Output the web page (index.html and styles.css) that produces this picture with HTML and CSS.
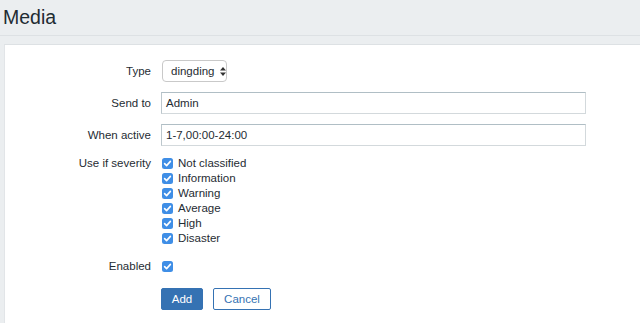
FILE: index.html
```html
<!DOCTYPE html>
<html>
<head>
<meta charset="utf-8">
<link rel="stylesheet" href="styles.css">
</head>
<body>
<header class="header"><h1 class="title">Media</h1></header>
<main class="panel">
  <form class="form">
    <div class="row">
      <label class="label">Type</label>
      <div class="select"><span class="select-text">dingding</span>
        <svg class="select-arrows" width="6" height="9" viewBox="0 0 6 9"><path d="M3 0L6 3.5H0Z" fill="#333"/><path d="M3 9L6 5.5H0Z" fill="#333"/></svg>
      </div>
    </div>
    <div class="row">
      <label class="label">Send to</label>
      <div class="input">Admin</div>
    </div>
    <div class="row">
      <label class="label">When active</label>
      <div class="input">1-7,00:00-24:00</div>
    </div>
    <div class="row row-checks">
      <label class="label label-line">Use if severity</label>
      <ul class="checks">
        <li class="check-line"><span class="cb"><svg width="11" height="11" viewBox="0 0 11 11"><path d="M2.6 5.6L4.6 7.6L8.4 3.4" fill="none" stroke="#fff" stroke-width="1.6" stroke-linecap="round" stroke-linejoin="round"/></svg></span>Not classified</li>
        <li class="check-line"><span class="cb"><svg width="11" height="11" viewBox="0 0 11 11"><path d="M2.6 5.6L4.6 7.6L8.4 3.4" fill="none" stroke="#fff" stroke-width="1.6" stroke-linecap="round" stroke-linejoin="round"/></svg></span>Information</li>
        <li class="check-line"><span class="cb"><svg width="11" height="11" viewBox="0 0 11 11"><path d="M2.6 5.6L4.6 7.6L8.4 3.4" fill="none" stroke="#fff" stroke-width="1.6" stroke-linecap="round" stroke-linejoin="round"/></svg></span>Warning</li>
        <li class="check-line"><span class="cb"><svg width="11" height="11" viewBox="0 0 11 11"><path d="M2.6 5.6L4.6 7.6L8.4 3.4" fill="none" stroke="#fff" stroke-width="1.6" stroke-linecap="round" stroke-linejoin="round"/></svg></span>Average</li>
        <li class="check-line"><span class="cb"><svg width="11" height="11" viewBox="0 0 11 11"><path d="M2.6 5.6L4.6 7.6L8.4 3.4" fill="none" stroke="#fff" stroke-width="1.6" stroke-linecap="round" stroke-linejoin="round"/></svg></span>High</li>
        <li class="check-line"><span class="cb"><svg width="11" height="11" viewBox="0 0 11 11"><path d="M2.6 5.6L4.6 7.6L8.4 3.4" fill="none" stroke="#fff" stroke-width="1.6" stroke-linecap="round" stroke-linejoin="round"/></svg></span>Disaster</li>
      </ul>
    </div>
    <div class="row row-enabled">
      <label class="label label-line">Enabled</label>
      <div class="check-line"><span class="cb"><svg width="11" height="11" viewBox="0 0 11 11"><path d="M2.6 5.6L4.6 7.6L8.4 3.4" fill="none" stroke="#fff" stroke-width="1.6" stroke-linecap="round" stroke-linejoin="round"/></svg></span></div>
    </div>
    <div class="row row-buttons">
      <span class="label"></span>
      <div class="buttons">
        <button type="button" class="btn btn-primary">Add</button>
        <button type="button" class="btn btn-alt">Cancel</button>
      </div>
    </div>
  </form>
</main>
</body>
</html>
```
FILE: styles.css
```css
html, body {
  margin: 0;
  padding: 0;
  height: 100%;
  overflow: hidden;
}
body {
  background: #ebeef0;
  font-family: "Liberation Sans", Arial, Helvetica, sans-serif;
  font-size: 11.5px;
  color: #1f2c33;
  display: flex;
  flex-direction: column;
}
.header {
  flex: none;
  height: 36px;
  border-bottom: 1px solid #dde1e4;
  padding: 5px 0 0 3px;
  box-sizing: border-box;
}
.title {
  margin: 0;
  font-size: 19.5px;
  line-height: 24px;
  font-weight: normal;
  color: #1f2c33;
}
.panel {
  flex: 1;
  min-height: 0;
  margin: 8px 0 0 4px;
  background: #fff;
  border-top: 1px solid #dde1e4;
  border-left: 1px solid #e2e5e8;
  padding-top: 15px;
}
.form {
  display: flex;
  flex-direction: column;
}
.row {
  display: flex;
  align-items: center;
  column-gap: 10px;
}
.row + .row { margin-top: 10px; }
.row.row-checks { margin-top: 10px; align-items: flex-start; }
.row.row-enabled { margin-top: 13px; align-items: flex-start; }
.row.row-buttons { margin-top: 14px; }
.label {
  width: 146px;
  flex: none;
  text-align: right;
}
.label-line { line-height: 15px; }
.select {
  width: 65px;
  height: 22px;
  box-sizing: border-box;
  border: 1px solid #c9c9c9;
  border-radius: 4px;
  display: flex;
  align-items: center;
  padding-left: 8px;
  margin-left: 1px;
  background: #fff;
}
.select-text { flex: none; }
.select-arrows { margin-left: 6px; flex: none; }
.input {
  width: 425px;
  height: 22px;
  box-sizing: border-box;
  border: 1px solid #d3d9dc;
  border-top-color: #b0bec5;
  border-left-color: #bcc7cd;
  padding-left: 4px;
  line-height: 20px;
}
.checks {
  list-style: none;
  margin: 0;
  padding: 0;
}
.check-line {
  display: flex;
  align-items: center;
  height: 15px;
  line-height: 15px;
  margin-left: 1px;
}
.cb {
  width: 11px;
  height: 11px;
  border-radius: 2.5px;
  background: #3f8ee6;
  display: inline-flex;
  margin-right: 5px;
  flex: none;
}
.cb svg { display: block; }
.buttons {
  display: flex;
  column-gap: 10px;
}
.btn {
  height: 22px;
  box-sizing: border-box;
  font-family: inherit;
  font-size: 11.5px;
  padding: 0;
  border-radius: 2px;
  cursor: pointer;
}
.btn-primary {
  width: 42px;
  background: #3572b3;
  border: 1px solid #3572b3;
  color: #fff;
}
.btn-alt {
  width: 58px;
  background: #fff;
  border: 1px solid #3572b3;
  color: #3572b3;
}
```
